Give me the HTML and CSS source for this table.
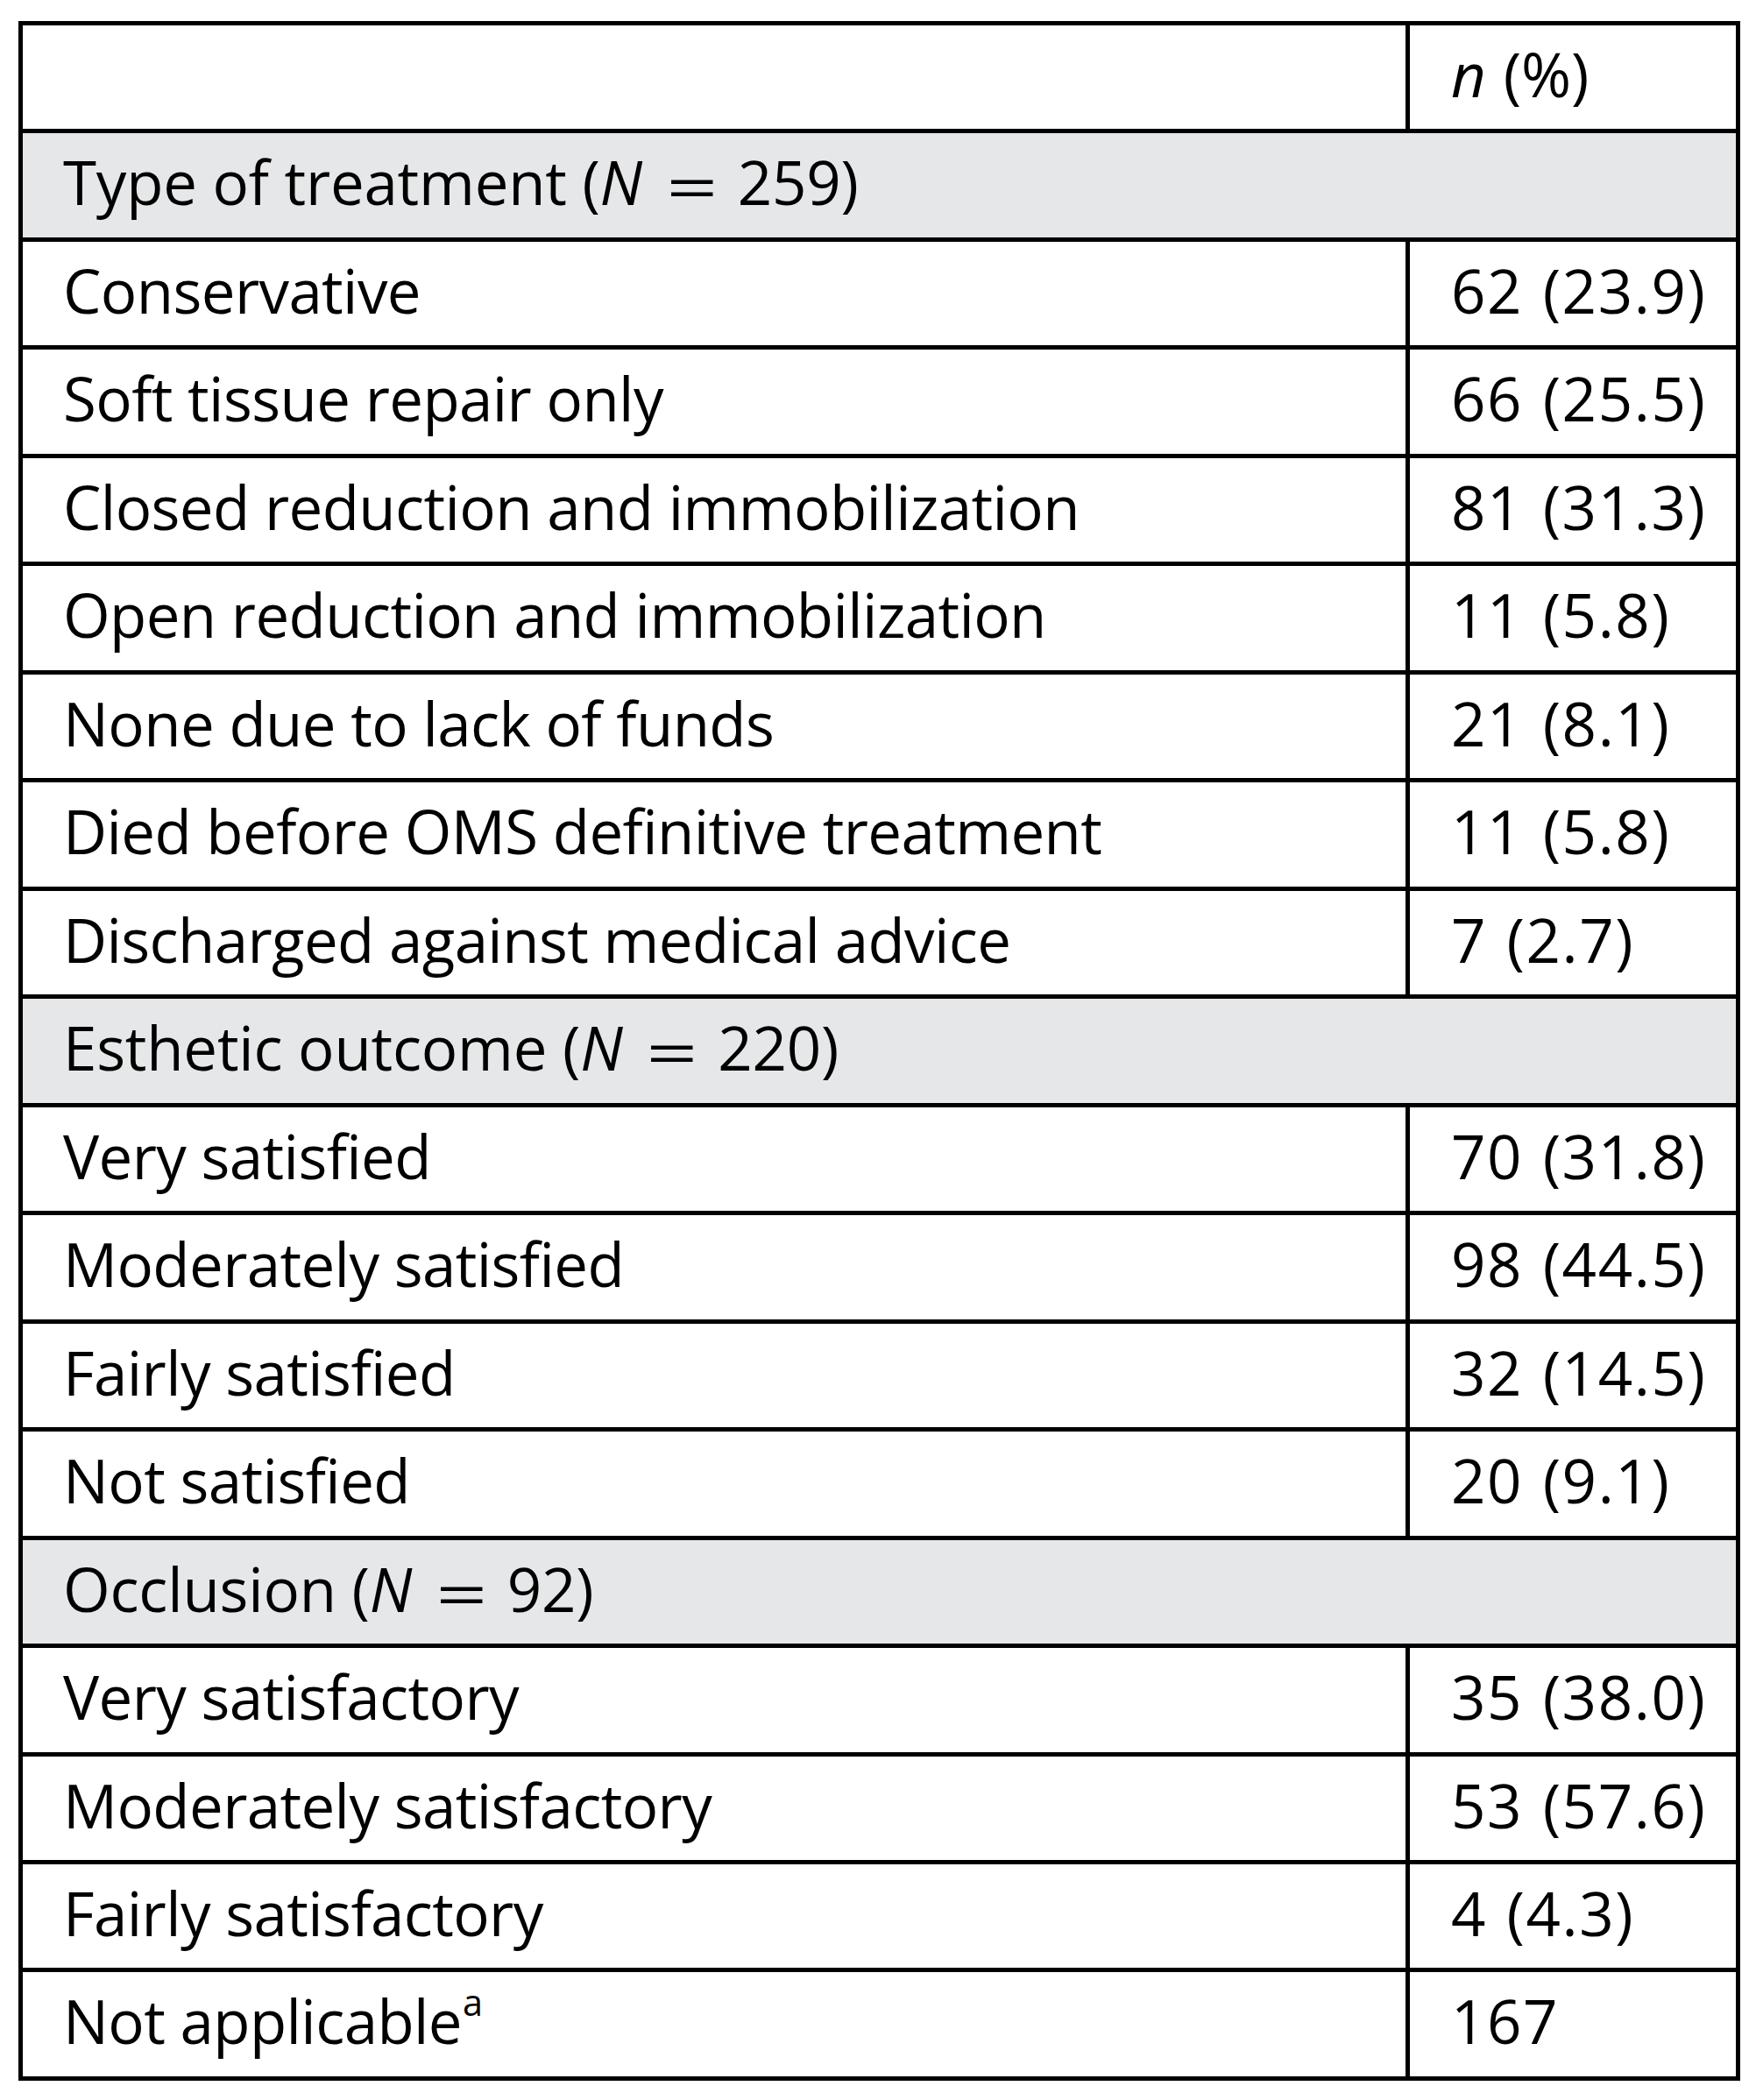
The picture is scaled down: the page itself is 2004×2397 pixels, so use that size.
FILE: index.html
```html
<!DOCTYPE html>
<html lang="en">
<head>
<meta charset="utf-8">
<title>Treatment and outcome</title>
<link rel="stylesheet" href="styles.css">
</head>
<body>
<div class="tbl" role="table">
  <div class="cell" role="columnheader"></div>
  <div class="cell num head" role="columnheader"><i>n</i> (%)</div>

  <div class="cell section" role="rowheader">Type of treatment (<i>N</i> <span class="eq">=</span> 259)</div>
  <div class="cell">Conservative</div><div class="cell num">62 (23.9)</div>
  <div class="cell">Soft tissue repair only</div><div class="cell num">66 (25.5)</div>
  <div class="cell">Closed reduction and immobilization</div><div class="cell num">81 (31.3)</div>
  <div class="cell">Open reduction and immobilization</div><div class="cell num">11 (5.8)</div>
  <div class="cell">None due to lack of funds</div><div class="cell num">21 (8.1)</div>
  <div class="cell">Died before OMS definitive treatment</div><div class="cell num">11 (5.8)</div>
  <div class="cell">Discharged against medical advice</div><div class="cell num">7 (2.7)</div>

  <div class="cell section" role="rowheader">Esthetic outcome (<i>N</i> <span class="eq">=</span> 220)</div>
  <div class="cell">Very satisfied</div><div class="cell num">70 (31.8)</div>
  <div class="cell">Moderately satisfied</div><div class="cell num">98 (44.5)</div>
  <div class="cell">Fairly satisfied</div><div class="cell num">32 (14.5)</div>
  <div class="cell">Not satisfied</div><div class="cell num">20 (9.1)</div>

  <div class="cell section" role="rowheader">Occlusion (<i>N</i> <span class="eq">=</span> 92)</div>
  <div class="cell">Very satisfactory</div><div class="cell num">35 (38.0)</div>
  <div class="cell">Moderately satisfactory</div><div class="cell num">53 (57.6)</div>
  <div class="cell">Fairly satisfactory</div><div class="cell num">4 (4.3)</div>
  <div class="cell">Not applicable<sup class="fn">a</sup></div><div class="cell num">167</div>
</div>
</body>
</html>
```

FILE: styles.css
```css
html, body {
  margin: 0;
  padding: 0;
  background: #ffffff;
}

body {
  font-family: "Open Sans", "Noto Sans", sans-serif;
  font-size: 69px;
  color: #000000;
}

.tbl {
  display: grid;
  grid-template-columns: 1578px 372px;
  grid-auto-rows: 118.47px;
  gap: 5px;
  padding: 5px;
  background: #000000;
  width: max-content;
  margin: 24px 0 0 21px;
}

.cell {
  background: #ffffff;
  padding-left: 46px;
  white-space: nowrap;
  line-height: 110px;
  letter-spacing: -0.6px;
}

.num {
  padding-left: 47px;
  letter-spacing: 1.6px;
  word-spacing: 3px;
}

.num.head {
  letter-spacing: 0;
  word-spacing: 2px;
}

.section {
  grid-column: 1 / -1;
  background: #e6e7e8;
  letter-spacing: -0.2px;
}

.eq {
  display: inline-block;
  margin: 0 15px 0 19px;
  transform: translateY(5px) scaleX(1.5);
}

.fn {
  font-size: 0.6em;
  line-height: 0;
  position: relative;
  top: -0.78em;
  vertical-align: baseline;
  margin-left: 1px;
}
```
